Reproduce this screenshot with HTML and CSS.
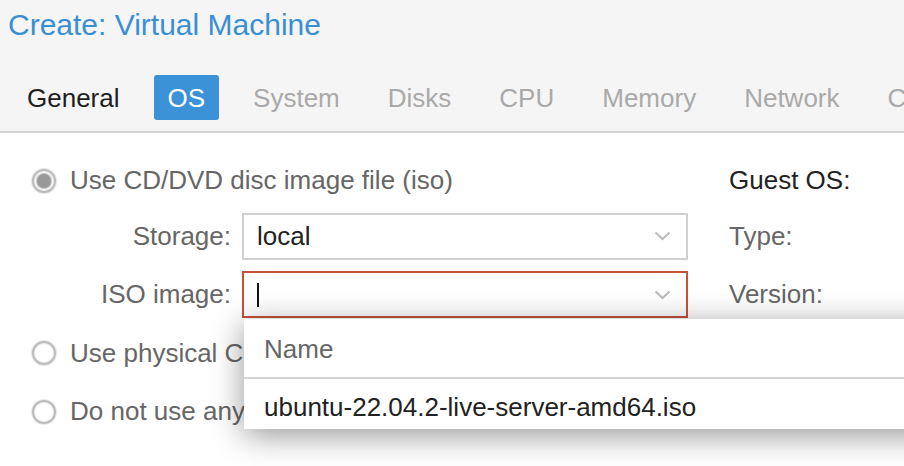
FILE: index.html
```html
<!DOCTYPE html>
<html lang="en">
<head>
<meta charset="utf-8">
<title>Create: Virtual Machine</title>
<link rel="stylesheet" href="styles.css">
</head>
<body>
<div class="dialog">
  <header class="head">
    <h1 class="title">Create: Virtual Machine</h1>
    <nav class="tabs">
      <span class="tab done">General</span>
      <span class="tab active">OS</span>
      <span class="tab">System</span>
      <span class="tab">Disks</span>
      <span class="tab">CPU</span>
      <span class="tab">Memory</span>
      <span class="tab">Network</span>
      <span class="tab">Confirm</span>
    </nav>
  </header>
  <main class="body">
    <div class="col-left">
      <div class="row radio-row first">
        <span class="radio checked"></span>
        <span class="rlabel">Use CD/DVD disc image file (iso)</span>
      </div>
      <div class="row field-row">
        <label class="flabel">Storage:</label>
        <div class="combo">
          <span class="value">local</span>
          <svg class="chev" width="17" height="10" viewBox="0 0 17 10"><path d="M1.5 1.5 L8.5 8 L15.5 1.5" fill="none" stroke="#bdbdbd" stroke-width="2.2"/></svg>
        </div>
      </div>
      <div class="row field-row">
        <label class="flabel">ISO image:</label>
        <div class="combo invalid">
          <span class="caret"></span>
          <svg class="chev" width="17" height="10" viewBox="0 0 17 10"><path d="M1.5 1.5 L8.5 8 L15.5 1.5" fill="none" stroke="#bdbdbd" stroke-width="2.2"/></svg>
          <div class="picker">
            <div class="picker-head">Name</div>
            <div class="picker-item">ubuntu-22.04.2-live-server-amd64.iso</div>
          </div>
        </div>
      </div>
      <div class="row radio-row">
        <span class="radio"></span>
        <span class="rlabel">Use physical CD/DVD Drive</span>
      </div>
      <div class="row radio-row">
        <span class="radio"></span>
        <span class="rlabel">Do not use any media</span>
      </div>
    </div>
    <div class="col-right">
      <div class="row first strong">Guest OS:</div>
      <div class="row muted">Type:</div>
      <div class="row muted">Version:</div>
    </div>
  </main>
</div>
</body>
</html>
```

FILE: styles.css
```css
html, body {
  margin: 0;
  padding: 0;
  overflow: hidden;
  background: #ffffff;
}

body {
  width: 904px;
  height: 466px;
  font-family: "Liberation Sans", Arial, sans-serif;
  font-size: 26px;
  color: #222;
}

.dialog {
  width: 904px;
  height: 466px;
  overflow: hidden;
}

.head {
  background: #f5f5f5;
  height: 131px;
  border-bottom: 2px solid #d2d2d2;
  padding: 0 0 0 8px;
  overflow: hidden;
}

.title {
  margin: 0;
  font-size: 30px;
  font-weight: normal;
  line-height: 50px;
  color: #3a8fd3;
  white-space: nowrap;
}

.tabs {
  display: flex;
  gap: 16px;
  margin-top: 25px;
  margin-left: 3px;
  white-space: nowrap;
}

.tab {
  flex: none;
  height: 45px;
  line-height: 47px;
  padding: 0 16px;
  border-radius: 3px;
  color: #a9a9a9;
}

.tab.done {
  color: #1e1e1e;
}

.tab.active {
  background: #3b92d7;
  color: #ffffff;
  padding: 0 14px;
  margin: 0 2px;
}

.body {
  display: flex;
  gap: 41px;
  padding: 24px 0 0 32px;
}

.col-left,
.col-right {
  display: flex;
  flex-direction: column;
  gap: 11.5px;
}

.col-left {
  width: 656px;
  flex: none;
}

.col-right {
  flex: none;
  width: 300px;
}

.row {
  height: 47px;
  display: flex;
  align-items: center;
  white-space: nowrap;
}

.row.first {
  margin-bottom: -3px;
}

.radio-row {
  gap: 14px;
  color: #666;
}

.radio {
  width: 20px;
  height: 20px;
  flex: none;
  border-radius: 50%;
  border: 2px solid #bcbcbc;
  box-shadow: 0 0 1px 1px rgba(0, 0, 0, 0.1), inset 0 0 1px 1px rgba(0, 0, 0, 0.08);
  background: #fff;
  display: flex;
  align-items: center;
  justify-content: center;
}

.radio.checked::after {
  content: "";
  width: 14px;
  height: 14px;
  border-radius: 50%;
  background: #999;
  box-shadow: 0 0 1px 1px rgba(150, 150, 150, 0.6);
}

.flabel {
  width: 199px;
  padding-right: 11px;
  flex: none;
  text-align: right;
  color: #666;
}

.combo {
  position: relative;
  box-sizing: border-box;
  width: 446px;
  height: 47px;
  border: 2px solid #d0d0d0;
  background: #fff;
  display: flex;
  align-items: center;
  padding: 0 15px 0 13px;
}

.combo.invalid {
  border-color: #c9503b;
}

.value {
  flex: 1;
  color: #222;
}

.caret {
  width: 2px;
  height: 24px;
  background: #111;
  margin-right: auto;
}

.chev {
  flex: none;
  margin-left: auto;
}

.picker {
  position: absolute;
  z-index: 10;
  left: 0;
  top: calc(100% + 3px);
  width: 700px;
  background: #fff;
  box-shadow: 0 6px 30px rgba(0, 0, 0, 0.42);
}

.picker-head {
  height: 58px;
  line-height: 60px;
  padding-left: 20px;
  color: #666;
  border-bottom: 2px solid #d4d4d4;
}

.picker-item {
  height: 50px;
  line-height: 56px;
  padding-left: 20px;
  color: #222;
}

.strong {
  color: #222;
}

.muted {
  color: #666;
}
```
